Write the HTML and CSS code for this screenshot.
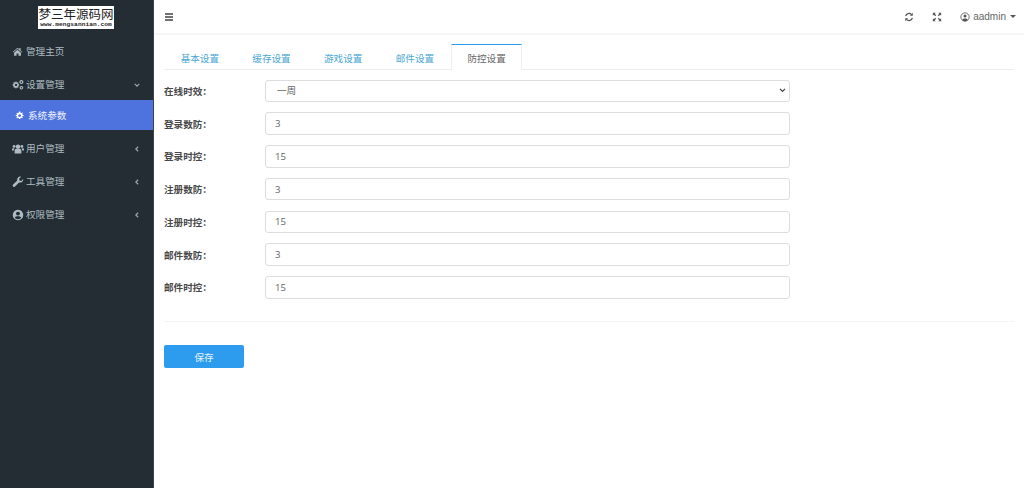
FILE: index.html
```html
<!DOCTYPE html>
<html lang="zh">
<head>
<meta charset="utf-8">
<title>系统参数</title>
<link rel="stylesheet" href="styles.css">
</head>
<body>
<div class="app">
  <aside class="sidebar">
    <div class="brand"><div class="logo"><span class="logo-main">梦三年源码网</span><span class="logo-sub">www.mengsannian.com</span></div></div>
    <nav class="menu">
      <a class="item"><svg class="ico ico-home" viewBox="0 0 16 16"><path d="M8 2.500 1 8.600l.7.800L8 4l6.300 5.400.7-.8-2.500-2.200V3h-1.800v1.900zM3 9.800V14h3.600v-3h2.800v3H13V9.800L8 5.500z"/></svg><span class="label">管理主页</span></a>
      <a class="item"><svg class="ico" viewBox="0 0 16 16"><path fill-rule="evenodd" d="M6 4.500l1 .3.800-.6 1 1-.5.900.4 1 1 .2v1.400l-1 .2-.4 1 .5.900-1 1-.8-.6-1 .4-.3 1H4.800l-.3-1-1-.4-.8.6-1-1 .5-.9-.4-1-1-.2V7.100l1-.2.4-1-.5-.9 1-1 .8.600 1-.3.300-1h1.400zM5.400 6.200a1.600 1.600 0 1 0 .01 0z"/><path fill-rule="evenodd" d="M12.500 1.300a2.700 2.700 0 1 0 .01 0zM12.500 3a1 1 0 1 1-.01 0zM12.500 9.200a2.400 2.400 0 1 0 .01 0zM12.500 10.700a.9.900 0 1 1-.01 0z"/></svg><span class="label">设置管理</span><svg class="caret" viewBox="0 0 8 8"><path d="M1 2.500 4 5.500 7 2.500"/></svg></a>
      <a class="sub"><svg class="ico" viewBox="0 0 16 16"><path fill-rule="evenodd" d="M9.400 1l.4 2 1.300.6 1.800-1.100 1 1-1.100 1.800.6 1.300 2 .4v1.400l-2 .4-.6 1.300 1.100 1.800-1 1-1.800-1.100-1.300.6-.4 2H7l-.4-2-1.300-.6-1.800 1.100-1-1 1.100-1.800-.6-1.300-2-.4V7.400l2-.4.6-1.300-1.100-1.800 1-1 1.800 1.100L6.600 3l.4-2zM8.200 5.700a2.500 2.500 0 1 0 .01 0z"/></svg><span class="label">系统参数</span></a>
      <a class="item"><svg class="ico" viewBox="0 0 16 16"><circle cx="8" cy="5" r="3"/><circle cx="2.800" cy="4.500" r="1.900"/><circle cx="13.200" cy="4.500" r="1.900"/><path d="M3.500 14V10c0-1.500 1.200-2 2-2h5c.8 0 2 .5 2 2v4zM0 10V8.500C0 7.400.8 7 1.500 7h1.800c-.4.500-.8 1.200-.8 2v1zM16 10V8.500c0-1.100-.8-1.500-1.500-1.500h-1.800c.4.500.8 1.200.8 2v1z"/></svg><span class="label">用户管理</span><svg class="caret" viewBox="0 0 8 8"><path d="M5.500 1 2.500 4 5.500 7"/></svg></a>
      <a class="item"><svg class="ico" viewBox="0 0 16 16"><path d="M15 4.500a4.200 4.200 0 0 1-5.600 4L3.700 14.300a1.800 1.800 0 0 1-2.500-2.500l5.800-5.700a4.200 4.200 0 0 1 5.200-5.200L9.500 3.600 10 6l2.400.5 2.500-2.500z"/></svg><span class="label">工具管理</span><svg class="caret" viewBox="0 0 8 8"><path d="M5.500 1 2.500 4 5.500 7"/></svg></a>
      <a class="item"><svg class="ico" viewBox="0 0 16 16"><path fill-rule="evenodd" d="M8 1a7 7 0 1 0 .01 0zM8 3.500a2.600 2.600 0 1 1-.01 0zM3.600 11.700c.8-1.500 2.400-2 4.400-2s3.600.5 4.400 2A5.500 5.500 0 0 1 8 13.600a5.500 5.500 0 0 1-4.400-1.900z"/></svg><span class="label">权限管理</span><svg class="caret" viewBox="0 0 8 8"><path d="M5.500 1 2.500 4 5.500 7"/></svg></a>
    </nav>
  </aside>
  <main class="main">
    <header class="topbar">
      <svg class="bars" viewBox="0 0 10 10"><path d="M1 2h8M1 5h8M1 8h8"/></svg>
      <div class="tools">
        <svg class="tool" viewBox="0 0 12 12"><path d="M2 5a4 4 0 0 1 7-1.800M10 7a4 4 0 0 1-7 1.800"/><path class="fill" d="M10.500 1v3.500H7zM1.500 11V7.500H5z"/></svg>
        <svg class="tool" viewBox="0 0 12 12"><path class="fill" d="M1 1h3.500L3.300 2.200 5 4 4 5 2.200 3.300 1 4.500zM11 1v3.500L9.800 3.300 8 5 7 4l1.800-1.800L7.500 1zM1 11V7.500l1.200 1.200L4 7l1 1-1.800 1.800L4.500 11zM11 11H7.500l1.300-1.200L7 8l1-1 1.800 1.800L11 7.500z"/></svg>
        <div class="user">
          <svg class="avatar" viewBox="0 0 12 12"><circle cx="6" cy="6" r="5"/><circle class="fill" cx="6" cy="4.700" r="1.800"/><path class="fill" d="M2.800 9.500c.5-1.300 1.700-1.800 3.200-1.800s2.700.5 3.200 1.800A4.800 4.800 0 0 1 6 11a4.800 4.800 0 0 1-3.200-1.500z"/></svg>
          <span class="uname">aadmin</span><i class="tri"></i>
        </div>
      </div>
    </header>
    <section class="content">
      <ul class="tabs">
        <li class="tab">基本设置</li>
        <li class="tab">缓存设置</li>
        <li class="tab">游戏设置</li>
        <li class="tab">邮件设置</li>
        <li class="tab active">防控设置</li>
      </ul>
      <form class="form">
        <div class="row"><label class="name">在线时效：</label><select class="field"><option>一周</option></select></div>
        <div class="row"><label class="name">登录数防：</label><input class="field" value="3"></div>
        <div class="row"><label class="name">登录时控：</label><input class="field" value="15"></div>
        <div class="row"><label class="name">注册数防：</label><input class="field" value="3"></div>
        <div class="row"><label class="name">注册时控：</label><input class="field" value="15"></div>
        <div class="row"><label class="name">邮件数防：</label><input class="field" value="3"></div>
        <div class="row"><label class="name">邮件时控：</label><input class="field" value="15"></div>
        <hr class="rule">
        <button class="save" type="button">保存</button>
      </form>
    </section>
  </main>
</div>
</body>
</html>
```
FILE: styles.css
```css
* { box-sizing: border-box; }
html, body { margin: 0; height: 100%; }
body { font-family: "Open Sans", "Noto Sans CJK SC", sans-serif; font-size: 9.600px; color: #555; background: #fff; overflow: hidden; }
.app { display: flex; height: 488px; }
.sidebar { width: 154px; flex: none; background: #232d33; border-right: 1px solid #3a4449; }
.brand { height: 34px; display: flex; padding: 6px 0 0 38px; }
.logo { width: 76px; height: 23px; background: #fff; color: #222; display: flex; flex-direction: column; align-items: center; }
.logo-main { font-size: 12.500px; line-height: 15px; height: 15px; font-family: "Noto Sans CJK SC", sans-serif; white-space: nowrap; }
.logo-sub { font-family: "Liberation Mono", monospace; font-size: 6.200px; line-height: 7px; height: 7px; font-weight: bold; letter-spacing: .05px; white-space: nowrap; }
.menu { display: flex; flex-direction: column; }
.item, .sub { display: flex; align-items: center; color: #aebbc1; height: 33px; padding: 2px 0 0 12px; }
.sub { height: 30px; margin-bottom: 1px; background: #4e73df; color: #f2f4fb; padding: 1px 0 0 15px; }
.ico { width: 12px; height: 12px; fill: #aebbc1; margin-right: 2px; flex: none; }
.ico-home { width: 11px; height: 11px; margin-right: 3px; }
.sub .ico { width: 9px; height: 9px; fill: #fff; margin-right: 4px; }
.label { flex: 1; line-height: 14px; }
.caret { width: 6px; height: 6px; fill: none; stroke: #9aa7ad; stroke-width: 1.600; margin-right: 13px; }
.main { flex: 1; min-width: 0; display: flex; flex-direction: column; }
.topbar { height: 35px; flex: none; display: flex; align-items: center; justify-content: space-between; padding: 0 8px 0 10px; border-bottom: 2px solid #f6f6f6; }
.bars { width: 10px; height: 10px; fill: none; stroke: #444; stroke-width: 1.500; }
.tools { display: flex; align-items: center; gap: 18px; }
.tool { width: 10px; height: 10px; fill: none; stroke: #555; stroke-width: 1.500; }
.tool .fill { fill: #555; stroke: none; }
.user { display: flex; align-items: center; color: #666; gap: 3px; font-family: "Liberation Sans", sans-serif; font-size: 10px; }
.avatar { width: 10px; height: 10px; fill: none; stroke: #555; stroke-width: 1; }
.avatar .fill { fill: #555; stroke: none; }
.tri { width: 0; height: 0; border: 3px solid transparent; border-top-color: #555; border-bottom: 0; margin-left: 1px; }
.content { padding: 9px 10px 0; }
.tabs { list-style: none; margin: 0 0 9.500px; padding: 0; display: flex; height: 26px; border-bottom: 1px solid #eee; }
.tab { width: 71.700px; height: 26px; display: flex; align-items: center; justify-content: center; color: #4aa8d2; padding-top: 1px; }
.tab.active { color: #666; background: #fff; border: 1px solid #eee; border-top: 1px solid #2d9cee; border-bottom: 0; }
.form { display: flex; flex-direction: column; }
.row { display: flex; align-items: center; height: 22.600px; margin-bottom: 10.200px; }
.name { width: 101px; flex: none; font-weight: 700; color: #484848; }
.field { width: 525px; height: 22.600px; border: 1px solid #ddd; border-radius: 3px; background: #fff; padding: 0 9px; font: inherit; color: #666; outline: none; }
select.field { padding-left: 11px; appearance: none; -webkit-appearance: none; background-image: url("data:image/svg+xml,%3Csvg xmlns='http://www.w3.org/2000/svg' viewBox='0 0 8 6'%3E%3Cpath d='M1 1l3 3 3-3' fill='none' stroke='%23444' stroke-width='1.500'/%3E%3C/svg%3E"); background-repeat: no-repeat; background-size: 7px 5px; background-position: right 3px center; }
.rule { width: 850px; height: 1px; margin: 12.300px 0 23px; border: 0; background: #f4f4f4; }
.save { width: 80px; height: 23px; border: 0; border-radius: 2px; background: #2d9cee; color: #e8f4fd; font: inherit; padding: 0; }
```
